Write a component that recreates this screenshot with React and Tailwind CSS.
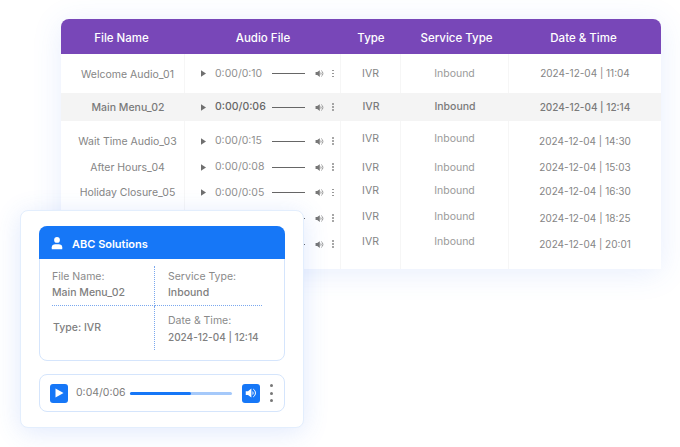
const rows = [
  { name: 'Welcome Audio_01', time: '0:00/0:10', date: '2024-12-04 | 11:04', row: 'h-[39px] bg-white', lift: 'pt-[2px]', audio: 'pt-0', side: 'pb-0' },
  { name: 'Main Menu_02', time: '0:00/0:06', date: '2024-12-04 | 12:14', row: 'h-[28px] bg-[#f4f4f4] font-medium text-[#7a7a7a]', lift: 'pt-[2px]', audio: 'pt-0', side: 'pb-0', active: true },
  { name: 'Wait Time Audio_03', time: '0:00/0:15', date: '2024-12-04 | 14:30', row: 'h-[33px] bg-white', lift: 'pt-[9px]', audio: 'pt-[7px]', side: 'pt-[2px]' },
  { name: 'After Hours_04', time: '0:00/0:08', date: '2024-12-04 | 15:03', row: 'h-[26px] bg-white', lift: 'pt-[2px]', audio: 'pt-0', side: 'pt-[2px]' },
  { name: 'Holiday Closure_05', time: '0:00/0:05', date: '2024-12-04 | 16:30', row: 'h-[25px] bg-white', lift: 'pt-0', audio: 'pt-0', side: 'pb-[4px]' },
  // the card covers name and time on the last two rows
  { name: '', time: '', date: '2024-12-04 | 18:25', row: 'h-[26px] bg-white', lift: 'pt-[2px]', audio: 'pt-0', side: 'pb-[2px]' },
  { name: '', time: '', date: '2024-12-04 | 20:01', row: 'h-[38px] bg-white', lift: 'pb-[10px]', audio: 'pb-[12px]', side: 'pb-[16px]' },
]

const gridCols = 'grid grid-cols-[124px_156px_60px_108px_152px]'

function Speaker({ className }) {
  return (
    <svg viewBox="0 0 16 16" className={className} fill="currentColor">
      <path d="M1 5.5h3L8.5 2v12L4 10.5H1z" />
      <path d="M10 5.2a3.4 3.4 0 0 1 0 5.6z" />
      <path d="M11 2.8a6 6 0 0 1 0 10.4" fill="none" stroke="currentColor" strokeWidth="1.3" />
    </svg>
  )
}

function Dots() {
  return (
    <div className="flex flex-col gap-[1.5px]">
      <span className="h-[1.5px] w-[1.5px] rounded-full bg-[#8a8a8a]" />
      <span className="h-[1.5px] w-[1.5px] rounded-full bg-[#8a8a8a]" />
      <span className="h-[1.5px] w-[1.5px] rounded-full bg-[#8a8a8a]" />
    </div>
  )
}

function TableRow({ item }) {
  const line = item.active ? '' : 'border-r border-[#f6f6f6]'
  return (
    <div className={`${gridCols} ${item.row}`}>
      <div className={`flex items-center justify-center pl-[10px] ${line} ${item.lift}`}>{item.name}</div>
      <div className={`flex items-center pl-[16px] ${line} ${item.audio}`}>
        <svg viewBox="0 0 6 8" className="h-[7px] w-[5px] text-[#6f6f6f]" fill="currentColor">
          <path d="M0 0l6 4-6 4z" />
        </svg>
        <span className={`ml-[9px] w-[57px] whitespace-nowrap ${item.active ? 'text-[#666]' : 'text-[#8f8f8f]'}`}>{item.time}</span>
        <span className="h-px w-[33px] bg-[#666]" />
        <Speaker className="ml-[10px] h-[9px] w-[9px] text-[#777]" />
        <div className="ml-[8px]">
          <Dots />
        </div>
      </div>
      <div className={`flex items-center justify-center ${line} ${item.side}`}>IVR</div>
      <div className={`flex items-center justify-center ${line} ${item.side}`}>
        <span className={item.active ? '' : 'text-[#9a9a9a]'}>Inbound</span>
      </div>
      <div className={`flex items-center justify-center text-[10px] ${item.lift}`}>
        <span className="mb-[2px]">{item.date}</span>
      </div>
    </div>
  )
}

function DetailText({ label, value }) {
  return (
    <>
      <p className="text-[#8a8a8a]">{label}</p>
      <p className="whitespace-nowrap font-medium text-[#808080]">{value}</p>
    </>
  )
}

function InfoCard() {
  return (
    <div className="absolute left-[20px] top-[210px] h-[218px] w-[284px] rounded-lg border border-[#e3eefd] bg-white px-[18px] pt-[15px] shadow-[0_4px_26px_rgba(60,120,240,0.16)]">
      <div className="rounded-lg border border-[#d5e5fc]">
        <div className="-m-px flex h-[33px] items-center rounded-t-lg bg-[#1677f7] pl-[11px] text-[11px] font-semibold text-white">
          <svg viewBox="0 0 16 16" className="h-[14px] w-[14px]" fill="currentColor">
            <circle cx="8" cy="4.5" r="3.3" />
            <path d="M2 15v-2.2C2 10.4 4 9.4 6 9.4h4c2 0 4 1 4 3.4V15z" />
          </svg>
          <span className="ml-[8px] mt-[3px]">ABC Solutions</span>
        </div>
        <div className="pb-[10px] pl-[12px] pt-[8px] text-[10.5px]">
          <div className="grid w-[210px] grid-cols-[103px_107px]">
            <div className="h-[40px] border-b border-r border-dotted border-[#7aa8ee] pt-[3px]">
              <DetailText label="File Name:" value="Main Menu_02" />
            </div>
            <div className="h-[40px] border-b border-dotted border-[#7aa8ee] pl-[13px] pt-[3px]">
              <DetailText label="Service Type:" value="Inbound" />
            </div>
            <div className="flex h-[44px] items-center border-r border-dotted border-[#7aa8ee] pl-px font-medium text-[#808080]">
              Type: IVR
            </div>
            <div className="h-[44px] pl-[13px] pt-[7px]">
              <p className="text-[#8a8a8a]">Date &amp; Time:</p>
              <p className="whitespace-nowrap text-[10px] font-medium leading-[16px] text-[#808080]">2024-12-04 | 12:14</p>
            </div>
          </div>
        </div>
      </div>
      <div className="mt-[13px] flex h-[38px] items-center rounded-lg border border-[#d5e5fc] pl-[10px]">
        <div className="flex h-[19px] w-[18px] items-center justify-center rounded-[3px] bg-[#1677f7]">
          <svg viewBox="0 0 10 10" className="h-[10px] w-[10px] text-white" fill="currentColor">
            <path d="M1.5 0.5l8 4.5-8 4.5z" />
          </svg>
        </div>
        <span className="ml-[8px] w-[54px] whitespace-nowrap text-[10.5px] text-[#7d7d7d]">0:04/0:06</span>
        <div className="h-[3px] w-[102px] rounded-full bg-[#a5c9fa]">
          <div className="h-[3px] w-[61px] rounded-full bg-[#1677f7]" />
        </div>
        <div className="ml-[10px] flex h-[19px] w-[18px] items-center justify-center rounded-[3px] bg-[#1677f7]">
          <Speaker className="h-[12px] w-[12px] text-white" />
        </div>
        <div className="ml-[10px] flex flex-col gap-[4.5px]">
          <span className="h-[3px] w-[3px] rounded-full bg-[#777]" />
          <span className="h-[3px] w-[3px] rounded-full bg-[#777]" />
          <span className="h-[3px] w-[3px] rounded-full bg-[#777]" />
        </div>
      </div>
    </div>
  )
}

export default function App() {
  return (
    <div className="relative h-[447px] w-[680px] overflow-hidden bg-white font-['Inter',sans-serif]">
      <div className="pl-[61px] pt-[19px]">
        <div className="w-[600px] rounded-t-lg rounded-b shadow-[0_4px_30px_rgba(70,120,240,0.13)]">
          <div className={`${gridCols} h-[35px] items-center rounded-t-lg bg-[#7847b8] pt-[4px] text-center text-[11.5px] font-medium text-white`}>
            <span className="pr-[3px]">File Name</span>
            <span>Audio File</span>
            <span>Type</span>
            <span className="pl-[3px]">Service Type</span>
            <span className="pr-[3px]">Date &amp; Time</span>
          </div>
          <div className="text-[10.5px] text-[#858585]">
            {rows.map((item, i) => (
              <TableRow key={i} item={item} />
            ))}
          </div>
        </div>
      </div>
      <InfoCard />
    </div>
  )
}
